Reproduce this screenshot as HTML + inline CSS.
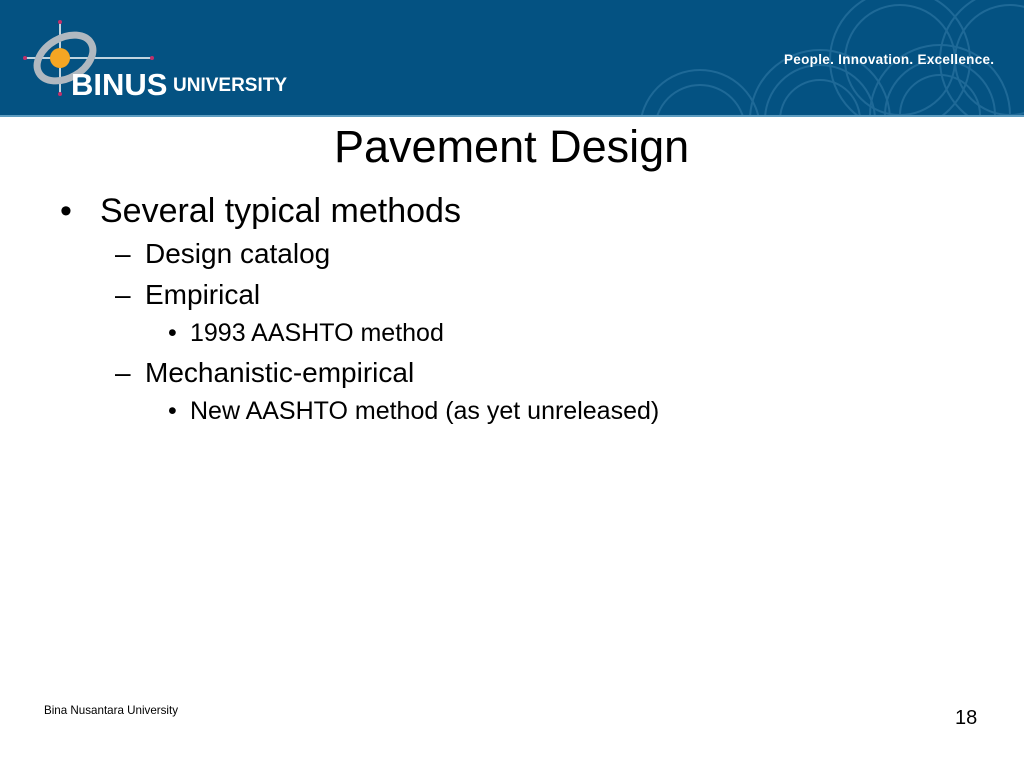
<!DOCTYPE html>
<html><head><style>
body{margin:0;width:1024px;height:768px;background:#fff;position:relative;overflow:hidden;font-family:"Liberation Sans",Arial,sans-serif;color:#000}
.hdr{position:absolute;left:0;top:0;width:1024px;height:115px;background:#045282;border-bottom:2px solid #5d9cc0}
.t{position:absolute;white-space:nowrap;line-height:1}
</style></head><body>
<div class="hdr">
<svg width="1024" height="115" style="position:absolute;left:0;top:0">
<g fill="none" stroke="#2a73a0" stroke-width="2" opacity="0.7">
<circle cx="940" cy="115" r="70"/><circle cx="940" cy="115" r="55"/><circle cx="940" cy="115" r="40"/>
<circle cx="820" cy="120" r="70"/><circle cx="820" cy="120" r="55"/><circle cx="820" cy="120" r="40"/>
<circle cx="1010" cy="60" r="70"/><circle cx="1010" cy="60" r="55"/>
<circle cx="900" cy="60" r="70"/><circle cx="900" cy="60" r="55"/>
<circle cx="700" cy="130" r="60"/><circle cx="700" cy="130" r="45"/>
</g>
<line x1="25" y1="58" x2="152" y2="58" stroke="#fff" stroke-width="1.5"/>
<line x1="60" y1="22" x2="60" y2="95" stroke="#fff" stroke-width="1.5"/>
<circle cx="25" cy="58" r="2" fill="#c0306a"/><circle cx="152" cy="58" r="2" fill="#c0306a"/>
<circle cx="60" cy="22" r="2" fill="#c0306a"/><circle cx="60" cy="94" r="2" fill="#c0306a"/>
<ellipse cx="65" cy="58" rx="30" ry="20" fill="none" stroke="#b0b8c0" stroke-width="7" transform="rotate(-30 65 58)"/>
<circle cx="60" cy="58" r="10" fill="#f5a623"/>
<text x="71" y="95" font-family="Liberation Sans" font-weight="bold" font-size="31" fill="#fff">BINUS</text>
<text x="173" y="91" font-family="Liberation Sans" font-weight="bold" font-size="19" fill="#fff">UNIVERSITY</text>
<text x="784" y="64" font-family="Liberation Sans" font-weight="bold" font-size="13.5" fill="#fff" letter-spacing="0.3">People. Innovation. Excellence.</text>
</svg>
</div>
<div class="t" style="left:334px;top:124px;font-size:45px">Pavement Design</div>
<div class="t" style="left:60px;top:194px;font-size:34px">•</div>
<div class="t" style="left:100px;top:194px;font-size:34px">Several typical methods</div>
<div class="t" style="left:115px;top:240px;font-size:28px">–</div>
<div class="t" style="left:145px;top:240px;font-size:28px">Design catalog</div>
<div class="t" style="left:115px;top:281px;font-size:28px">–</div>
<div class="t" style="left:145px;top:281px;font-size:28px">Empirical</div>
<div class="t" style="left:168px;top:321px;font-size:25px">•</div>
<div class="t" style="left:190px;top:321px;font-size:25px">1993 AASHTO method</div>
<div class="t" style="left:115px;top:359px;font-size:28px">–</div>
<div class="t" style="left:145px;top:359px;font-size:28px">Mechanistic-empirical</div>
<div class="t" style="left:168px;top:399px;font-size:25px">•</div>
<div class="t" style="left:190px;top:399px;font-size:25px">New AASHTO method (as yet unreleased)</div>
<div class="t" style="left:44px;top:705px;font-size:11.6px">Bina Nusantara University</div>
<div class="t" style="left:955px;top:708px;font-size:20px">18</div>
</body></html>
